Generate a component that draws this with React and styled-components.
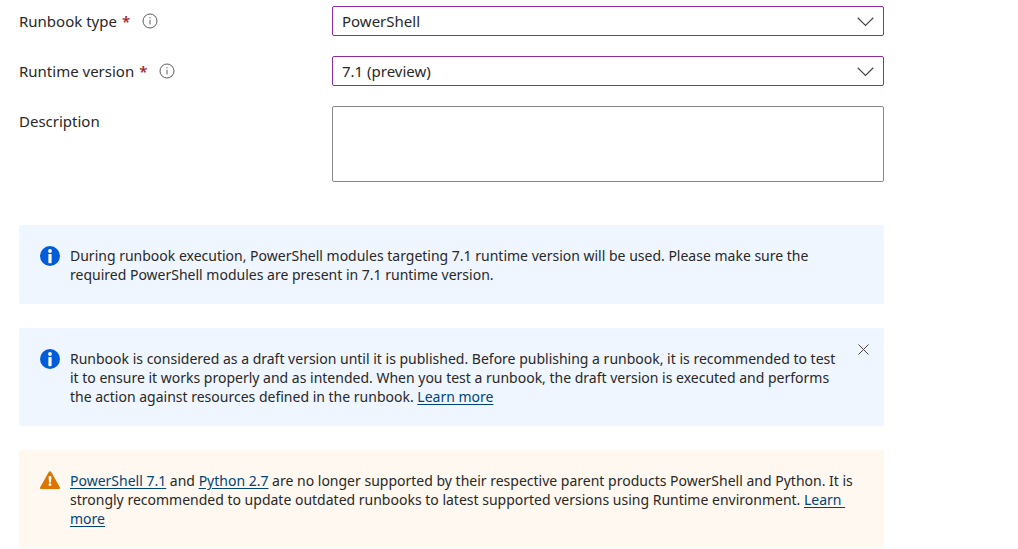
import React, { useState } from "react";
import styled, { createGlobalStyle } from "styled-components";

const GlobalStyle = createGlobalStyle`
  *, *::before, *::after { box-sizing: border-box; }
  body {
    margin: 0;
    background: #fff;
    color: #292827;
    font-family: "Segoe UI", "Noto Sans", "Open Sans", sans-serif;
    font-size: 14px;
    line-height: 19px;
  }
`;

const Page = styled.main`
  padding: 6px 134px 0 19px;
`;

const Form = styled.form`
  display: flex;
  flex-direction: column;
  gap: 20px;
  margin-bottom: 43px;
`;

const FieldRow = styled.div`
  display: grid;
  grid-template-columns: 313px 1fr;
  align-items: start;
`;

const LabelCell = styled.div`
  display: flex;
  align-items: center;
  gap: 12px;
  height: 30px;
  font-size: 15px;
`;

const Required = styled.span`
  color: #a4262c;
  font-weight: 600;
  margin-left: 5px;
`;

const InfoButton = styled.button`
  display: flex;
  padding: 0;
  border: 0;
  background: none;
  color: #605e5c;
`;

const SelectBox = styled.div`
  position: relative;
  height: 30px;

  svg {
    position: absolute;
    right: 10px;
    top: 11px;
    pointer-events: none;
  }
`;

const Select = styled.select`
  appearance: none;
  width: 100%;
  height: 100%;
  padding: 0 32px 0 9px;
  border: 1px solid #8a2da5;
  border-radius: 2px;
  background: #fff;
  color: inherit;
  font: inherit;
  font-size: 15px;
`;

const TextArea = styled.textarea`
  display: block;
  width: 100%;
  height: 76px;
  padding: 5px 10px;
  border: 1px solid #8a8886;
  border-radius: 2px;
  resize: none;
  color: inherit;
  font: inherit;
`;

const Notices = styled.div`
  display: flex;
  flex-direction: column;
  gap: 24px;
`;

const NoticeBox = styled.section`
  display: flex;
  align-items: flex-start;
  gap: 10px;
  padding: 21px 10px 20px 21px;
  border-radius: 2px;
  background: ${(p) => (p.$warning ? "#fff8f0" : "#eff6ff")};

  > svg { flex: none; }
`;

const Message = styled.p`
  flex: 1;
  min-width: 0;
  margin: 0;
`;

const Link = styled.a`
  color: #004578;
  text-decoration: underline;
  text-underline-offset: 2px;
`;

const CloseButton = styled.button`
  display: flex;
  flex: none;
  margin: -10px 0 0 -10px;
  padding: 5px;
  border: 0;
  background: none;
  color: #484644;
`;

const InfoOutline = () => (
  <svg width="16" height="16" viewBox="0 0 16 16" fill="none" stroke="currentColor" aria-hidden="true">
    <circle cx="8" cy="8" r="7" />
    <path d="M8 6.8V11.5" />
    <path d="M8 4.2v1.2" />
  </svg>
);

const Chevron = () => (
  <svg width="17" height="10" viewBox="0 0 17 10" fill="none" stroke="#484644" strokeWidth="1.2" aria-hidden="true">
    <path d="M.7 .8 8.5 8.4 16.3 .8" />
  </svg>
);

const InfoFilled = () => (
  <svg width="20" height="20" viewBox="0 0 20 20" aria-hidden="true">
    <circle cx="10" cy="10" r="10" fill="#015cda" />
    <circle cx="10" cy="5" r="1.9" fill="#fff" />
    <rect x="8.4" y="8" width="3.2" height="9.2" rx=".6" fill="#fff" />
  </svg>
);

const Warning = () => (
  <svg width="20" height="20" viewBox="0 0 20 20" aria-hidden="true">
    <path d="M8.9 .8c.5-.9 1.7-.9 2.2 0l8.7 15.5c.5.9 0 1.7-1 1.7H1.2c-1 0-1.5-.8-1-1.7Z" fill="#db7500" />
    <path d="M8.6 5.3h2.8l-.4 6.2H9Z" fill="#fff" />
    <circle cx="10" cy="13.7" r="1.4" fill="#fff" />
  </svg>
);

const Cross = () => (
  <svg width="11" height="11" viewBox="0 0 11 11" fill="none" stroke="currentColor" aria-hidden="true">
    <path d="M.5 .5 10.5 10.5M10.5 .5 .5 10.5" />
  </svg>
);

function SelectField({ id, label, options }) {
  return (
    <FieldRow>
      <LabelCell>
        <label htmlFor={id}>
          {label}
          <Required>*</Required>
        </label>
        <InfoButton type="button" aria-label={`About ${label}`}>
          <InfoOutline />
        </InfoButton>
      </LabelCell>
      <SelectBox>
        <Select id={id} required>
          {options.map((o) => (
            <option key={o}>{o}</option>
          ))}
        </Select>
        <Chevron />
      </SelectBox>
    </FieldRow>
  );
}

export default function App() {
  const [draftNotice, setDraftNotice] = useState(true);
  return (
    <>
      <GlobalStyle />
      <Page>
        <Form>
          <SelectField id="type" label="Runbook type" options={["PowerShell"]} />
          <SelectField id="version" label="Runtime version" options={["7.1 (preview)"]} />
          <FieldRow>
            <LabelCell>
              <label htmlFor="description">Description</label>
            </LabelCell>
            <TextArea id="description" />
          </FieldRow>
        </Form>
        <Notices>
          <NoticeBox>
            <InfoFilled />
            <Message>
              During runbook execution, PowerShell modules targeting 7.1 runtime version will be used. Please make sure the
              <br />
              required PowerShell modules are present in 7.1 runtime version.
            </Message>
          </NoticeBox>
          {draftNotice && (
            <NoticeBox>
              <InfoFilled />
              <Message>
                Runbook is considered as a draft version until it is published. Before publishing a runbook, it is recommended to test
                <br />
                it to ensure it works properly and as intended. When you test a runbook, the draft version is executed and performs
                <br />
                the action against resources defined in the runbook. <Link href="#drafts">Learn more</Link>
              </Message>
              <CloseButton type="button" aria-label="Dismiss" onClick={() => setDraftNotice(false)}>
                <Cross />
              </CloseButton>
            </NoticeBox>
          )}
          <NoticeBox $warning>
            <Warning />
            <Message>
              <Link href="#powershell">PowerShell 7.1</Link> and <Link href="#python">Python 2.7</Link> are no longer supported by
              their respective parent products PowerShell and Python. It is
              <br />
              strongly recommended to update outdated runbooks to latest supported versions using Runtime environment.{" "}
              <Link href="#runtime">
                Learn&nbsp;
                <br />
                more
              </Link>
            </Message>
          </NoticeBox>
        </Notices>
      </Page>
    </>
  );
}
